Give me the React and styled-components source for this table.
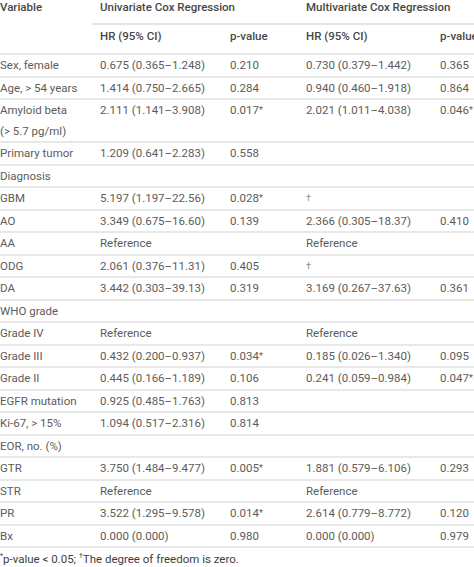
import React from 'react';
import styled, { createGlobalStyle } from 'styled-components';

const GlobalStyle = createGlobalStyle`
  html, body {
    margin: 0;
    padding: 0;
    background: #ffffff;
  }
  body {
    font-family: Roboto, "Liberation Sans", Arial, sans-serif;
    color: #5c5c5c;
    overflow: hidden;
  }
`;

const Page = styled.div`
  width: 474px;
  height: 567px;
  overflow: hidden;
  background: #fff;
`;

const Table = styled.table`
  border-collapse: collapse;
  table-layout: fixed;
  width: 600px;
  margin-left: -8px;
  font-size: 11.5px;
`;

const HeadCell = styled.th`
  text-align: left;
  font-weight: 500;
  color: #474747;
  padding: ${(p) => (p.$top ? '0 8px' : '1px 8px 6px')};
  line-height: ${(p) => (p.$top ? '14px' : '21px')};
  height: ${(p) => (p.$top ? '23px' : 'auto')};
  vertical-align: top;
  white-space: nowrap;
  border-bottom: ${(p) => (p.$line ? '2px solid #e4e4e4' : 'none')};
`;

const Row = styled.tr`
  border-bottom: 2px solid #e8e8e8;
`;

const Cell = styled.td`
  padding: 0 8px;
  line-height: 20.5px;
  vertical-align: top;
  white-space: ${(p) => (p.$wrap ? 'pre-line' : 'nowrap')};
  color: ${(p) => (p.$dim ? '#8a8a8a' : '#5c5c5c')};
  font-size: ${(p) => (p.$dim ? '9px' : '11.5px')};
`;

const Star = styled.span`
  font-size: 9px;
  vertical-align: 1px;
`;

const Footnote = styled.p`
  margin: 3px 0 0;
  font-size: 11.5px;
  line-height: 16px;
  color: #3e3e3e;
`;

const Sup = styled.sup`
  font-size: 7px;
  vertical-align: top;
  line-height: 10px;
`;

const rows = [
  ['Sex, female', '0.675 (0.365–1.248)', '0.210', '0.730 (0.379–1.442)', '0.365'],
  ['Age, > 54 years', '1.414 (0.750–2.665)', '0.284', '0.940 (0.460–1.918)', '0.864'],
  ['Amyloid beta\n(> 5.7 pg/ml)', '2.111 (1.141–3.908)', '0.017*', '2.021 (1.011–4.038)', '0.046*'],
  ['Primary tumor', '1.209 (0.641–2.283)', '0.558', '', ''],
  ['Diagnosis', '', '', '', ''],
  ['GBM', '5.197 (1.197–22.56)', '0.028*', '†', ''],
  ['AO', '3.349 (0.675–16.60)', '0.139', '2.366 (0.305–18.37)', '0.410'],
  ['AA', 'Reference', '', 'Reference', ''],
  ['ODG', '2.061 (0.376–11.31)', '0.405', '†', ''],
  ['DA', '3.442 (0.303–39.13)', '0.319', '3.169 (0.267–37.63)', '0.361'],
  ['WHO grade', '', '', '', ''],
  ['Grade IV', 'Reference', '', 'Reference', ''],
  ['Grade III', '0.432 (0.200–0.937)', '0.034*', '0.185 (0.026–1.340)', '0.095'],
  ['Grade II', '0.445 (0.166–1.189)', '0.106', '0.241 (0.059–0.984)', '0.047*'],
  ['EGFR mutation', '0.925 (0.485–1.763)', '0.813', '', ''],
  ['Ki-67, > 15%', '1.094 (0.517–2.316)', '0.814', '', ''],
  ['EOR, no. (%)', '', '', '', ''],
  ['GTR', '3.750 (1.484–9.477)', '0.005*', '1.881 (0.579–6.106)', '0.293'],
  ['STR', 'Reference', '', 'Reference', ''],
  ['PR', '3.522 (1.295–9.578)', '0.014*', '2.614 (0.779–8.772)', '0.120'],
  ['Bx', '0.000 (0.000)', '0.980', '0.000 (0.000)', '0.979'],
];

const PValue = ({ value }) => {
  if (!value.endsWith('*')) return value;
  return (
    <>
      {value.slice(0, -1)}
      <Star>*</Star>
    </>
  );
};

function App() {
  return (
    <Page>
      <GlobalStyle />
      <Table>
        <colgroup>
          <col style={{ width: 100 }} />
          <col style={{ width: 130 }} />
          <col style={{ width: 76 }} />
          <col style={{ width: 134 }} />
          <col style={{ width: 160 }} />
        </colgroup>
        <thead>
          <tr>
            <HeadCell $top>Variable</HeadCell>
            <HeadCell $top $line colSpan={2}>Univariate Cox Regression</HeadCell>
            <HeadCell $top $line colSpan={2}>Multivariate Cox Regression</HeadCell>
          </tr>
          <Row>
            <HeadCell />
            <HeadCell>HR (95% CI)</HeadCell>
            <HeadCell>p-value</HeadCell>
            <HeadCell>HR (95% CI)</HeadCell>
            <HeadCell>p-value</HeadCell>
          </Row>
        </thead>
        <tbody>
          {rows.map((r) => (
            <Row key={r[0]}>
              <Cell $wrap>{r[0]}</Cell>
              <Cell $dim={r[1] === '†'}>{r[1]}</Cell>
              <Cell><PValue value={r[2]} /></Cell>
              <Cell $dim={r[3] === '†'}>{r[3]}</Cell>
              <Cell><PValue value={r[4]} /></Cell>
            </Row>
          ))}
        </tbody>
      </Table>
      <Footnote>
        <Sup>*</Sup>p-value &lt; 0.05; <Sup>†</Sup>The degree of freedom is zero.
      </Footnote>
    </Page>
  );
}

export default App;
